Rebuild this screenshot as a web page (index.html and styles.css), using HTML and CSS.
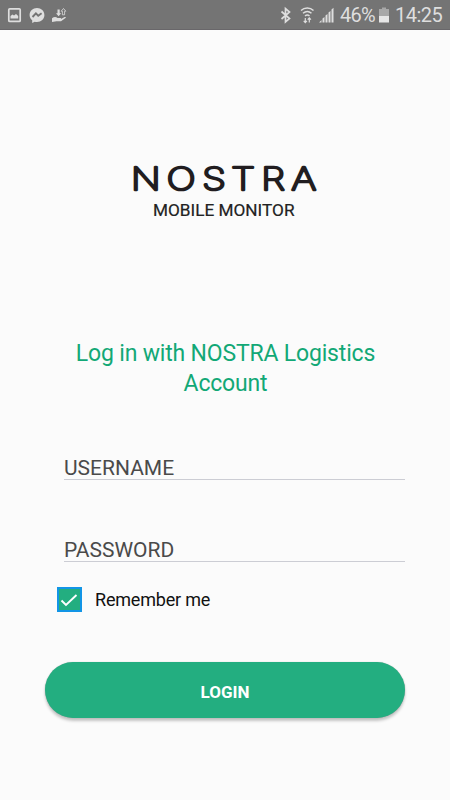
FILE: index.html
```html
<!DOCTYPE html>
<html lang="en">
<head>
<meta charset="utf-8">
<title>NOSTRA Mobile Monitor</title>
<link rel="stylesheet" href="styles.css">
</head>
<body>
<header class="status">
  <svg class="status-left" width="70" height="30" viewBox="0 0 70 30" fill="none">
    <rect x="8.800" y="8.800" width="11.400" height="12.600" rx="1" stroke="#dedede" stroke-width="1.700"/>
    <path d="M10.500 18.500v-2.500l2-1.500 1.500 1 2-1.500 2.200 2v2.500z" fill="#dedede"/>
    <path d="M37 8c-4.200 0-7.400 3-7.400 7 0 2.200 1 4 2.600 5.300V23l2.500-1.300c.7.200 1.500.3 2.300.3 4.200 0 7.400-3 7.400-7s-3.200-7-7.400-7z" fill="#dedede"/>
    <path d="M32.500 17l3.400-3.600 2.300 2.300 3.400-2.500" stroke="#747474" stroke-width="1.900"/>
    <path d="M52 18.300c2-1.600 4-1.400 5.500-.4h3c.8 0 .8 1 0 1.200h-2.500 3l3.600-2c1-.4 1.600.3.900 1l-4.500 3.200h-4.500L52 22z" fill="#dedede"/>
    <path d="M57.500 9.500h2.200v3.800h1.500l-2.600 2.900-2.600-2.900h1.500z" fill="#dedede"/>
    <path d="M63.500 8.500l2.300 2.700h-1.200v3.600h-2.200v-3.600h-1.200z" stroke="#dedede" stroke-width=".8"/>
  </svg>
  <div class="status-right">
    <svg width="60" height="30" viewBox="0 0 60 30" fill="none">
      <path d="M1.500 11.500l8 7-4 3.500V8.500l4 3.500-8 7" stroke="#dedede" stroke-width="1.700"/>
      <path d="M21 10.500c3.500-3.300 9-3.300 12.500 0M23 13.300c2.600-2.200 6-2.200 8.500 0M25 16c1.500-1.200 3-1.200 4.500 0" stroke="#dedede" stroke-width="1.500"/>
      <path d="M25.300 18v4.500M23.700 20.800l1.600 1.700 1.600-1.700M29.300 22.500V18M27.700 19.700l1.600-1.700 1.600 1.700" stroke="#dedede" stroke-width="1.200"/>
      <path d="M39 22.500l2.500-2.500v2.500zM42.500 22.500v-4l2-1.500v5.500zM45.500 22.500v-7l2-1.500v8.500zM48.500 22.500V12.500l2-1.500v11.500zM51.500 22.500V9.500l2-1.700v14.700z" fill="#dedede"/>
    </svg>
    <span class="percent">46%</span>
    <svg class="battery" width="12" height="30" viewBox="0 0 12 30">
      <path d="M1 9h3V7.500h4V9h3v7H1z" fill="#a8a8a8"/>
      <path d="M1 16h10v6.500H1z" fill="#e6e6e6"/>
    </svg>
    <span class="clock">14:25</span>
  </div>
</header>
<main class="login">
  <svg class="brand" width="210" height="70" viewBox="120 155 210 70" role="img">
    <text class="brand-name" transform="translate(0 189.700) scale(1.240 1)" x="117.700 146 172.600 196 220.300 245" y="0">NOSTRA</text>
    <text class="brand-sub" x="153" y="215.700" textLength="141.500" lengthAdjust="spacingAndGlyphs">MOBILE MONITOR</text>
  </svg>
  <h1 class="title">Log in with NOSTRA Logistics Account</h1>
  <div class="field username">USERNAME</div>
  <div class="field password">PASSWORD</div>
  <div class="remember">
    <span class="check"><svg width="21" height="21" viewBox="0 0 21 21" fill="none"><path d="M2.500 11.500l4.500 4.500L17.500 6" stroke="#fff" stroke-width="1.900"/></svg></span>
    <span>Remember me</span>
  </div>
  <button class="submit">LOGIN</button>
</main>
</body>
</html>
```

FILE: styles.css
```css
* { box-sizing: border-box; }
body {
  margin: 0;
  width: 450px;
  height: 800px;
  overflow: hidden;
  background: #fbfbfb;
  font-family: Roboto, sans-serif;
}
.status {
  display: flex;
  justify-content: space-between;
  height: 30px;
  background: #747474;
  border-bottom: 1px solid #69676a;
  color: #dedede;
  font-size: 20px;
  line-height: 31px;
}
.status-right { display: flex; padding-right: 8px; }
.percent { width: 35px; letter-spacing: -0.8px; }
.battery { margin-left: 3px; }
.clock { width: 47px; margin-left: 5px; letter-spacing: -0.5px; }
.login { display: flex; flex-direction: column; }
.brand { margin: 125px 0 0 120px; }
.brand-name {
  font-family: Inter, sans-serif;
  font-size: 31px;
  font-weight: 100;
  text-anchor: middle;
  fill: #211d20;
  stroke: #211d20;
  stroke-width: 2.7px;
  stroke-linejoin: round;
}
.brand-sub { font-size: 16.3px; fill: #222; stroke: #222; stroke-width: .2px; }
.title {
  margin: 114px 60px 0 61px;
  color: #12a876;
  font-size: 23px;
  font-weight: 400;
  letter-spacing: -0.18px;
  line-height: 30px;
  text-align: center;
}
.field {
  width: 341px;
  margin-left: 64px;
  border-bottom: 1px solid #cccdd4;
  color: #4a4a4a;
  font-size: 21px;
  line-height: 24px;
}
.username { height: 24px; margin-top: 57px; }
.password { height: 24px; margin-top: 58px; }
.remember {
  display: flex;
  align-items: center;
  gap: 13px;
  margin: 24px 0 0 57px;
  color: #111;
  font-size: 18px;
  letter-spacing: -0.2px;
  line-height: 27px;
}
.check {
  width: 25px;
  height: 25px;
  border: 2px solid #1295e6;
  background: #23ae80;
}
.check svg { display: block; }
.submit {
  width: 360px;
  height: 56px;
  margin: 49px 0 0 45px;
  padding: 4px 0 0;
  border: 0;
  border-radius: 28px;
  background: #23ae80;
  box-shadow: 0 3px 3px rgba(0, 0, 0, .22), 0 0 1px rgba(0, 0, 0, .3);
  color: #fff;
  font: 700 17px Roboto, sans-serif;
}
```
